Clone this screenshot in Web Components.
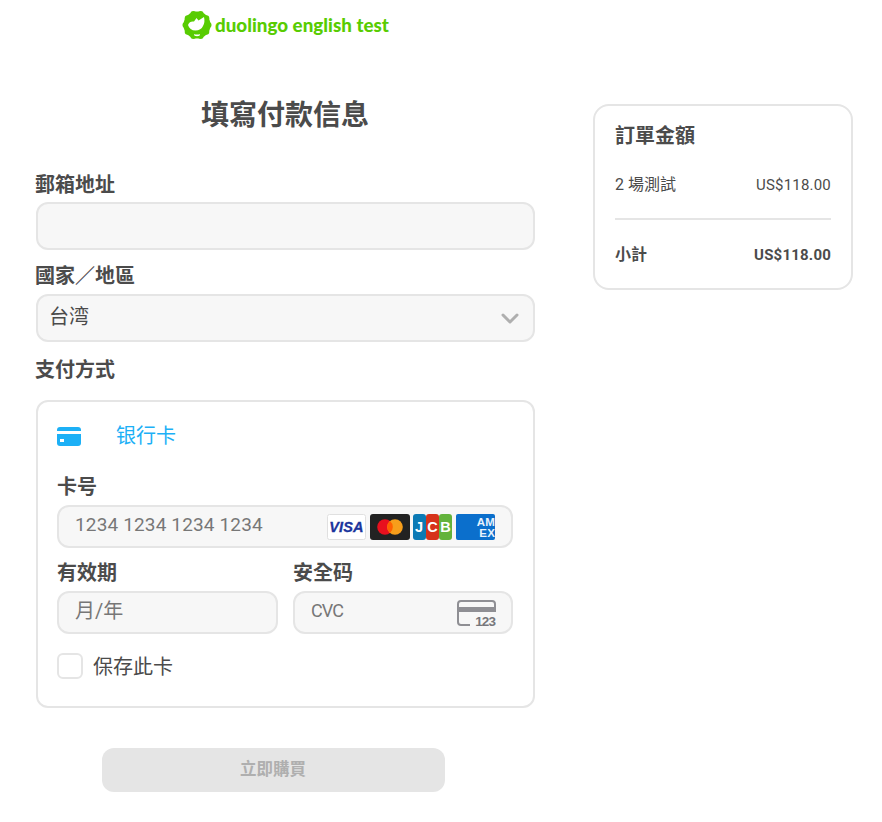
<!DOCTYPE html>
<html lang="zh-Hant">
<head>
<meta charset="utf-8">
<title>填寫付款信息</title>
<style>
  html, body { margin: 0; background: #fff; }
  body { font-family: "Roboto", "Noto Sans CJK TC", sans-serif; color: #4b4b4b; }
</style>
</head>
<body>
<checkout-page></checkout-page>

<template id="t-page">
  <style>
    :host { display: block; width: 882px; height: 822px; overflow: hidden; box-sizing: border-box; padding: 8px 0 0 36px; }
    .logo { display: flex; align-items: center; gap: 1px; height: 33px; padding-left: 144px; color: #58cc02;
      font: 900 18.800px "Lato", sans-serif; }
    .main { display: flex; gap: 58px; align-items: flex-start; padding-top: 56px; }
    .left { width: 499px; flex: none; }
    h1 { margin: 0 0 41px -1px; height: 32px; font: 700 28px/32px "Noto Sans CJK TC", sans-serif; color: #4b4b4b; text-align: center; }
    .label { display: block; height: 28px; margin-left: -1px; font: 700 20px/28px "Noto Sans CJK TC", sans-serif; }
    .pay { padding-top: 2px; }
    .buy { display: flex; justify-content: center; margin: 40px 0 0 -25px; }
    .side { margin-top: 7px; }
  </style>
  <div class="logo"><logo-mark></logo-mark><span>duolingo english test</span></div>
  <div class="main">
    <div class="left">
      <h1>填寫付款信息</h1>
      <form-field label="郵箱地址"></form-field>
      <form-field label="國家／地區" value="台湾" select style="--gap:5px"></form-field>
      <div class="pay"><span class="label">支付方式</span></div>
      <card-form></card-form>
      <div class="buy"><buy-button>立即購買</buy-button></div>
    </div>
    <order-summary class="side"></order-summary>
  </div>
</template>

<template id="t-logo">
  <style>:host { display: block; width: 34px; height: 32px; } svg { display: block; }</style>
  <svg width="34" height="32" viewBox="0 0 34 32">
    <g fill="#58cc02">
      <circle cx="17" cy="16" r="13.500"/>
      <circle cx="28.500" cy="16" r="3"/><circle cx="26.300" cy="22.800" r="3"/><circle cx="20.600" cy="27" r="3"/>
      <circle cx="13.400" cy="27" r="3"/><circle cx="7.700" cy="22.800" r="3"/><circle cx="5.500" cy="16" r="3"/>
      <circle cx="7.700" cy="9.200" r="3"/><circle cx="13.400" cy="5" r="3"/><circle cx="20.600" cy="5" r="3"/>
      <circle cx="26.300" cy="9.200" r="3"/>
    </g>
    <path fill="#fff" d="M8 16c1-3 3.500-4 6-3.500L16.500 9l2 2.500L24 8c.8 3.500.6 6.500-1 9-1.200 2.800-4 4.500-7.500 4.500-3.800 0-6.500-2-7.500-5.500z"/>
    <path fill="#fff" d="M14 25c1.500.7 4.500.7 6 0l-.5 1.800c-1.500.5-3.500.5-5 0z"/>
  </svg>
</template>

<template id="t-field">
  <style>
    :host { display: block; margin-bottom: 11px; }
    .label { display: block; height: 28px; margin: 0 0 var(--gap, 4px) -1px; font: 700 20px/28px "Noto Sans CJK TC", sans-serif; color: #4b4b4b; }
    .box { display: flex; align-items: center; justify-content: space-between; box-sizing: border-box; height: 48px;
      background: #f7f7f7; border: 2px solid #e5e5e5; border-radius: 12px; padding: 0 14px 0 11px;
      font: 400 20px/24px "Noto Sans CJK TC", sans-serif; color: #4b4b4b; }
    svg { display: block; }
    .val { position: relative; top: -2px; }
  </style>
  <span class="label"></span>
  <div class="box"><span class="val"></span></div>
</template>

<template id="t-card">
  <style>
    :host { display: block; box-sizing: border-box; height: 308px; margin-top: 17px; padding: 0 20px 0 19px; border: 2px solid #e5e5e5; border-radius: 12px; --gap: 5px; }
    .tab { display: flex; align-items: center; height: 64px; margin-bottom: 6px; color: #1cb0f6; font: 400 20px/28px "Noto Sans CJK TC", sans-serif; }
    .tab svg { display: block; margin: 5px 35px 0 0; }
    .tab span { margin-top: 2px; }
    .row { display: grid; grid-template-columns: 221px 220px; gap: 15px; margin-top: 10px; }
    .check { display: flex; align-items: center; gap: 10px; margin-top: 19px; font: 400 20px/26px "Noto Sans CJK TC", sans-serif; color: #4b4b4b; }
    .check i { display: block; box-sizing: border-box; width: 26px; height: 26px; border: 2px solid #e5e5e5; border-radius: 6px; background: #fff; }
    .brands { display: flex; }
    .brands svg { display: block; }
    .brands svg + svg { margin-left: 4px; }
    .brands svg.jcb { margin-left: 3px; }
    .end { display: block; margin-right: -1px; }
  </style>
  <div class="tab">
    <svg width="24" height="19" viewBox="0 0 24 19"><rect width="24" height="19" rx="3" fill="#1cb0f6"/><rect y="4" width="24" height="3" fill="#fff"/><rect x="3" y="12" width="4" height="3" fill="#fff"/></svg>
    <span>银行卡</span>
  </div>
  <card-input label="卡号" placeholder="1234 1234 1234 1234" style="--ph-size:19px;--ph-ls:.15px">
    <div class="brands" slot="end">
      <svg width="39" height="26" viewBox="0 0 39 26"><rect x=".5" y=".5" width="38" height="25" rx="2" fill="#fff" stroke="#e0e0e0"/><text x="19.500" y="18" text-anchor="middle" font-family="Liberation Sans" font-style="italic" font-weight="700" font-size="14.500" fill="#1a349c" stroke="#1a349c" stroke-width=".3">VISA</text></svg>
      <svg width="40" height="26" viewBox="0 0 40 26"><rect width="40" height="26" rx="3" fill="#222"/><circle cx="15" cy="13" r="7.800" fill="#e8101e"/><circle cx="25" cy="13" r="7.800" fill="#f79e1b"/><path d="M20 7a7.800 7.800 0 0 1 0 12 7.800 7.800 0 0 1 0-12z" fill="#ff5f00"/></svg>
      <svg class="jcb" width="39" height="26" viewBox="0 0 39 26" font-family="Liberation Sans" font-weight="700" font-size="14.500" fill="#fff" text-anchor="middle"><rect width="13" height="26" rx="3" fill="#0b7ab5"/><rect x="13" width="13" height="26" rx="3" fill="#d6331a"/><rect x="26" width="13" height="26" rx="3" fill="#63b33c"/><text x="6" y="18">J</text><text x="19.500" y="18">C</text><text x="32.500" y="18">B</text></svg>
      <svg width="39" height="26" viewBox="0 0 39 26" font-family="Liberation Sans" font-weight="700" fill="#e8f2fc"><rect width="39" height="26" rx="2" fill="#0b6fcc"/><text x="39" y="12" text-anchor="end" font-size="11.500">AM</text><text x="39" y="23" text-anchor="end" font-size="11.500">EX</text></svg>
    </div>
  </card-input>
  <div class="row">
    <card-input label="有效期" placeholder="月/年" style="--ph-size:20px;--ph-ls:0"></card-input>
    <card-input label="安全码" placeholder="CVC" style="--ph-size:18px;--ph-ls:-.9px">
      <svg slot="end" class="end" width="39" height="28" viewBox="0 0 39 28">
        <path d="M13 26H4a3 3 0 0 1-3-3V5a3 3 0 0 1 3-3h31a3 3 0 0 1 3 3v8" fill="none" stroke="#8f8f94" stroke-width="2"/>
        <rect x="1" y="8" width="37" height="5" fill="#8f8f94"/>
        <text x="38" y="26.500" text-anchor="end" font-family="Liberation Sans" font-weight="700" font-size="13.500" fill="#77777c">123</text>
      </svg>
    </card-input>
  </div>
  <label class="check"><i></i><span>保存此卡</span></label>
</template>

<template id="t-input">
  <style>
    :host { display: block; }
    .label { display: block; height: 28px; margin-bottom: var(--gap, 4px); font: 700 20px/28px "Noto Sans CJK TC", sans-serif; color: #4b4b4b; }
    .box { display: flex; align-items: center; justify-content: space-between; box-sizing: border-box; height: 43px;
      background: #f7f7f7; border: 2px solid #e5e5e5; border-radius: 12px; padding: 0 16px;
      font: 400 var(--ph-size, 18px)/24px "Roboto", "Noto Sans CJK TC", sans-serif; color: #777; letter-spacing: var(--ph-ls, 0); }
    ::slotted(*) { flex: none; }
    .ph { position: relative; top: -2px; }
  </style>
  <span class="label"></span>
  <div class="box"><span class="ph"></span><slot name="end"></slot></div>
</template>

<template id="t-button">
  <style>
    :host { display: block; width: 343px; height: 44px; border-radius: 12px; background: #e5e5e5; color: #afafaf;
      font: 700 16.500px/40px "Noto Sans CJK TC", sans-serif; text-align: center; }
  </style>
  <slot></slot>
</template>

<template id="t-summary">
  <style>
    :host { display: block; box-sizing: border-box; width: 260px; height: 186px; padding: 15px 20px 0; border: 2px solid #e5e5e5; border-radius: 16px; color: #4b4b4b; }
    h2 { margin: 0 0 24px; font: 700 20px/28px "Noto Sans CJK TC", sans-serif; }
    .line { display: flex; justify-content: space-between; font: 400 15px/24px "Roboto", "Noto Sans CJK TC", sans-serif; letter-spacing: .2px; }
    .line.total { font-weight: 700; }
    .line span:first-child { font-size: 16px; letter-spacing: 0; }
    hr { height: 2px; margin: 21px 0 23px; border: 0; background: #e5e5e5; }
  </style>
  <h2>訂單金額</h2>
  <div class="line"><span>2 場測試</span><span>US$118.00</span></div>
  <hr>
  <div class="line total"><span>小計</span><span>US$118.00</span></div>
</template>

<script>
function shadow(el, id) {
  const root = el.attachShadow({ mode: "open" });
  root.appendChild(document.getElementById(id).content.cloneNode(true));
  return root;
}

class CheckoutPage extends HTMLElement {
  constructor() { super(); shadow(this, "t-page"); }
}
class LogoMark extends HTMLElement {
  constructor() { super(); shadow(this, "t-logo"); }
}
class FormField extends HTMLElement {
  connectedCallback() {
    if (this.shadowRoot) return;
    const r = shadow(this, "t-field");
    r.querySelector(".label").textContent = this.getAttribute("label");
    r.querySelector(".val").textContent = this.getAttribute("value") || "";
    if (this.hasAttribute("select")) {
      r.querySelector(".box").insertAdjacentHTML("beforeend",
        '<svg width="18" height="11" viewBox="0 0 18 11"><path d="M2 2l7 7 7-7" fill="none" stroke="#afafaf" stroke-width="3" stroke-linecap="round" stroke-linejoin="round"/></svg>');
    }
  }
}
class CardForm extends HTMLElement {
  constructor() { super(); shadow(this, "t-card"); }
}
class CardInput extends HTMLElement {
  connectedCallback() {
    if (this.shadowRoot) return;
    const r = shadow(this, "t-input");
    r.querySelector(".label").textContent = this.getAttribute("label");
    r.querySelector(".ph").textContent = this.getAttribute("placeholder");
  }
}
class BuyButton extends HTMLElement {
  constructor() { super(); shadow(this, "t-button"); }
}
class OrderSummary extends HTMLElement {
  constructor() { super(); shadow(this, "t-summary"); }
}

customElements.define("logo-mark", LogoMark);
customElements.define("form-field", FormField);
customElements.define("card-input", CardInput);
customElements.define("card-form", CardForm);
customElements.define("buy-button", BuyButton);
customElements.define("order-summary", OrderSummary);
customElements.define("checkout-page", CheckoutPage);
</script>
</body>
</html>
